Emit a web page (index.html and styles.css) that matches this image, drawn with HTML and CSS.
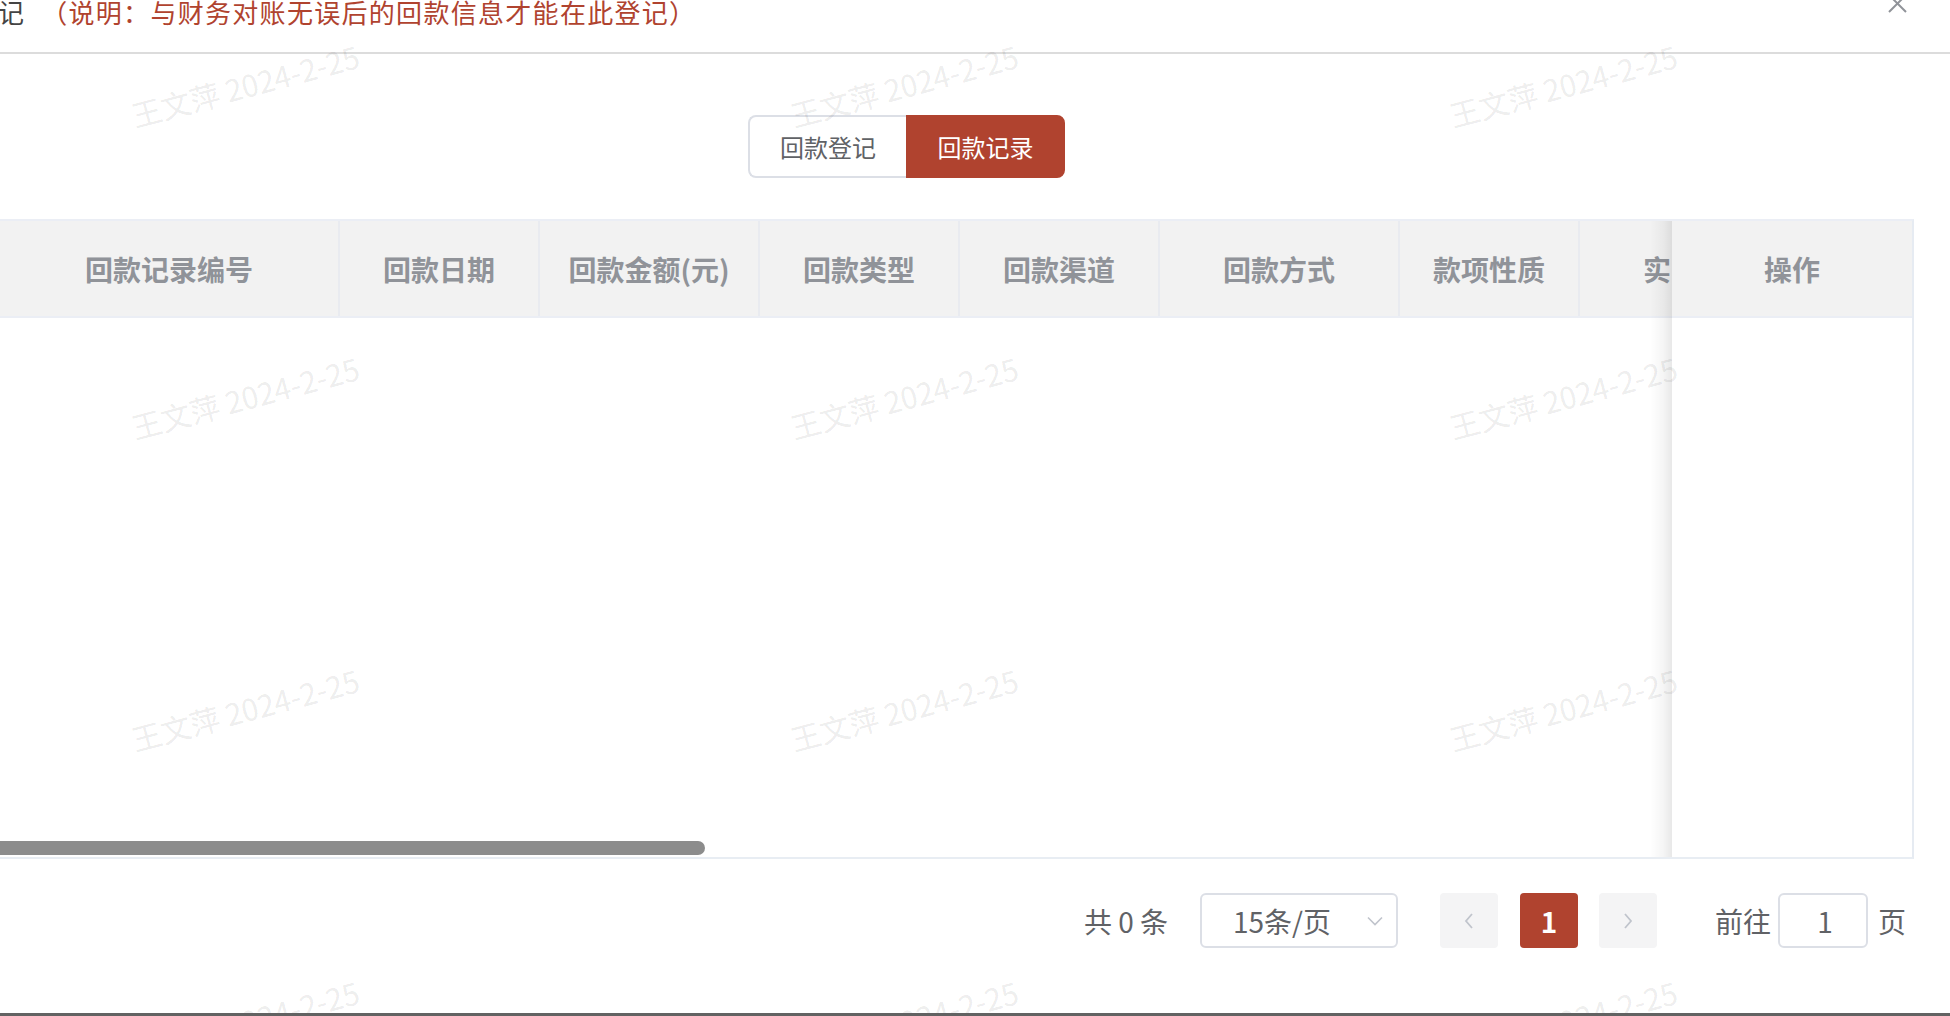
FILE: index.html
```html
<!DOCTYPE html>
<html lang="zh-CN">
<head>
<meta charset="utf-8">
<title>回款记录</title>
<link rel="stylesheet" href="styles.css">
</head>
<body>
<div class="dialog">
  <div class="dlg-header">
    <span class="dlg-title">回款登记<span class="dlg-note">（说明：与财务对账无误后的回款信息才能在此登记）</span></span>
    <button class="dlg-close" aria-label="关闭">
      <svg width="19" height="19" viewBox="0 0 19 19"><path d="M1 1 L18 18 M18 1 L1 18" stroke="#909399" stroke-width="2" fill="none"/></svg>
    </button>
  </div>
  <div class="dlg-body">
    <div class="seg">
      <span class="seg-btn">回款登记</span>
      <span class="seg-btn is-active">回款记录</span>
    </div>
    <div class="table">
      <div class="thead">
        <div class="th c1">回款记录编号</div>
        <div class="th c2">回款日期</div>
        <div class="th c3">回款金额(元)</div>
        <div class="th c4">回款类型</div>
        <div class="th c5">回款渠道</div>
        <div class="th c6">回款方式</div>
        <div class="th c7">款项性质</div>
        <div class="th c8">实收金额</div>
      </div>
      <div class="tbody">
        <div class="thumb"></div>
      </div>
      <div class="fixed-right">
        <div class="th fixed-th">操作</div>
        <div class="fixed-body"></div>
      </div>
    </div>
    <div class="pager">
      <span class="total">共 0 条</span>
      <div class="select">
        <span>15条/页</span>
        <svg width="16" height="10" viewBox="0 0 16 10"><polyline points="1,1.5 8,8.5 15,1.5" fill="none" stroke="#c0c4cc" stroke-width="1.6"/></svg>
      </div>
      <span class="pbtn prev"><svg width="10" height="16" viewBox="0 0 10 16"><polyline points="8,1 2,8 8,15" fill="none" stroke="#c0c4cc" stroke-width="1.8"/></svg></span>
      <span class="pbtn active">1</span>
      <span class="pbtn next"><svg width="10" height="16" viewBox="0 0 10 16"><polyline points="2,1 8,8 2,15" fill="none" stroke="#c0c4cc" stroke-width="1.8"/></svg></span>
      <span class="jump-label">前往</span>
      <div class="jump">1</div>
      <span>页</span>
    </div>
  </div>
  <div class="watermark">
    <div class="wm"><span>王文萍 2024-2-25</span></div>
    <div class="wm"><span>王文萍 2024-2-25</span></div>
    <div class="wm"><span>王文萍 2024-2-25</span></div>
    <div class="wm"><span>王文萍 2024-2-25</span></div>
    <div class="wm"><span>王文萍 2024-2-25</span></div>
    <div class="wm"><span>王文萍 2024-2-25</span></div>
    <div class="wm"><span>王文萍 2024-2-25</span></div>
    <div class="wm"><span>王文萍 2024-2-25</span></div>
    <div class="wm"><span>王文萍 2024-2-25</span></div>
    <div class="wm"><span>王文萍 2024-2-25</span></div>
    <div class="wm"><span>王文萍 2024-2-25</span></div>
    <div class="wm"><span>王文萍 2024-2-25</span></div>
    <div class="wm"><span>王文萍 2024-2-25</span></div>
    <div class="wm"><span>王文萍 2024-2-25</span></div>
    <div class="wm"><span>王文萍 2024-2-25</span></div>
    <div class="wm"><span>王文萍 2024-2-25</span></div>
  </div>
</div>
<div class="edge"></div>
</body>
</html>
```

FILE: styles.css
```css
html, body {
  margin: 0;
  padding: 0;
}
body {
  width: 1950px;
  height: 1016px;
  overflow: hidden;
  background: #fff;
  font-family: "Noto Sans CJK SC", "Noto Sans", sans-serif;
}

.dialog {
  position: relative;
  height: 1013px;
  overflow: hidden;
  background: #fff;
}
.edge {
  height: 3px;
  background: #626262;
}

/* header */
.dlg-header {
  position: relative;
  height: 52px;
  border-bottom: 2px solid #dcdcdc;
}
.dlg-title {
  display: block;
  margin-left: -84px;
  font-size: 26px;
  line-height: 24px;
  letter-spacing: 1.3px;
  color: #444;
  white-space: nowrap;
}
.dlg-note {
  margin-left: 16px;
  color: #b0432f;
}
.dlg-close {
  position: absolute;
  left: 1888px;
  top: -6px;
  width: 19px;
  height: 19px;
  padding: 0;
  border: 0;
  background: none;
  display: block;
}
.dlg-close svg { display: block; }

/* segmented buttons */
.seg {
  display: flex;
  width: max-content;
  margin: 61px 0 0 748px;
}
.seg-btn {
  box-sizing: border-box;
  width: 158px;
  height: 63px;
  display: flex;
  align-items: center;
  justify-content: center;
  font-size: 24px;
  color: #606266;
  border: 2px solid #dcdfe6;
  background: #fff;
}
.seg-btn:first-child {
  border-right: 0;
  border-radius: 8px 0 0 8px;
}
.seg-btn.is-active {
  width: 159px;
  background: #b0432f;
  border-color: #b0432f;
  color: #fff;
  border-radius: 0 8px 8px 0;
}

/* table */
.table {
  position: relative;
  box-sizing: border-box;
  width: 1914px;
  height: 640px;
  margin-top: 41px;
  border-top: 2px solid #ebeef5;
  border-right: 2px solid #e6ebf2;
  border-bottom: 2px solid #e8edf3;
  overflow: hidden;
}
.thead {
  display: flex;
  height: 95px;
  background: #f2f2f2;
  border-bottom: 2px solid #ebeef5;
}
.th {
  flex: none;
  box-sizing: border-box;
  display: flex;
  align-items: center;
  justify-content: center;
  font-size: 28px;
  font-weight: 700;
  color: #909399;
  border-right: 2px solid #e9ebf0;
  white-space: nowrap;
  overflow: hidden;
}
.c1 { width: 340px; }
.c2 { width: 200px; }
.c3 { width: 220px; }
.c4 { width: 200px; }
.c5 { width: 200px; }
.c6 { width: 240px; }
.c7 { width: 180px; }
.c8 { width: 240px; }

.tbody {
  box-sizing: border-box;
  height: 539px;
  display: flex;
  flex-direction: column;
  justify-content: flex-end;
  padding-bottom: 2px;
}
.thumb {
  width: 715px;
  height: 14px;
  margin-left: -10px;
  border-radius: 7px;
  background: #8c8c8c;
}

.fixed-right {
  position: absolute;
  top: 0;
  right: 0;
  bottom: 0;
  width: 240px;
  background: #fff;
  display: flex;
  flex-direction: column;
}
.fixed-right::before {
  content: "";
  position: absolute;
  left: -22px;
  top: 0;
  bottom: 0;
  width: 22px;
  background: linear-gradient(to right, rgba(0,0,0,0), rgba(0,0,0,0.04) 60%, rgba(0,0,0,0.09));
}
.fixed-th {
  height: 97px;
  width: 240px;
  background: #f2f2f2;
  border-right: 0;
  border-bottom: 2px solid #ebeef5;
}
.fixed-body {
  flex: 1;
  background: #fff;
}

/* pagination */
.pager {
  display: flex;
  align-items: center;
  height: 55px;
  margin-top: 34px;
  padding-left: 1084px;
  font-size: 28px;
  color: #606266;
  white-space: nowrap;
}
.total {
  width: 84px;
  margin-right: 32px;
  white-space: pre;
}
.select {
  box-sizing: border-box;
  width: 198px;
  height: 55px;
  border: 2px solid #dcdfe6;
  border-radius: 6px;
  display: flex;
  align-items: center;
  justify-content: space-between;
  padding: 0 13px 0 31px;
  margin-right: 42px;
}
.select svg { display: block; }
.pbtn {
  box-sizing: border-box;
  width: 58px;
  height: 55px;
  border-radius: 4px;
  background: #f4f4f5;
  display: flex;
  align-items: center;
  justify-content: center;
}
.pbtn svg { display: block; }
.prev { margin-right: 22px; }
.pbtn.active {
  background: #b0432f;
  color: #fff;
  font-weight: 700;
  margin-right: 21px;
}
.next { margin-right: 58px; }
.jump-label { margin-right: 7px; }
.jump {
  box-sizing: border-box;
  width: 90px;
  height: 55px;
  border: 2px solid #dcdfe6;
  border-radius: 6px;
  display: flex;
  align-items: center;
  justify-content: center;
  padding-left: 4px;
  margin-right: 10px;
}

/* watermark */
.watermark {
  position: absolute;
  left: -84px;
  top: -71px;
  display: grid;
  grid-template-columns: repeat(4, 659px);
  grid-auto-rows: 312px;
  pointer-events: none;
  z-index: 5;
}
.wm {
  display: flex;
  align-items: center;
  justify-content: center;
}
.wm span {
  display: block;
  transform: rotate(-15deg);
  font-size: 30px;
  color: rgba(0, 0, 0, 0.085);
  white-space: nowrap;
}
```
